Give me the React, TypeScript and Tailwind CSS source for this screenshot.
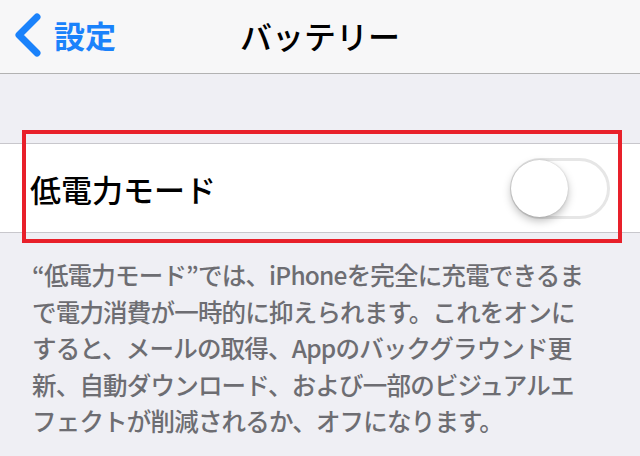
import React from "react";

const jp = { fontFamily: '"Noto Sans CJK JP", "Noto Sans", sans-serif' };

const BackChevron = () => (
  <svg width="30" height="46" viewBox="0 0 30 46" className="shrink-0">
    <polyline
      points="24,5 6,23 24,41"
      fill="none"
      stroke="#1a82fb"
      strokeWidth="7"
      strokeLinecap="round"
      strokeLinejoin="round"
    />
  </svg>
);

const Toggle = () => (
  <div className="relative w-[100px] h-[61px] rounded-full border-[3px] border-[#e6e6e6] bg-white">
    <div className="absolute left-[-2px] top-[-1px] w-[57px] h-[57px] rounded-full bg-white shadow-[0_4px_8px_rgba(0,0,0,0.25),0_0_2px_rgba(0,0,0,0.2)]" />
  </div>
);

export default function App() {
  return (
    <div className="w-[640px] h-[456px] bg-[#efeff4] overflow-hidden relative" style={jp}>
      {/* nav bar */}
      <div className="h-[74px] bg-[#f7f7f8] border-b border-[#b2b2b2] relative flex items-center">
        <div className="flex items-center gap-[11px] pl-[13px] pb-[4px]">
          <BackChevron />
          <span className="text-[31px] leading-none text-[#1a82fb] font-bold">設定</span>
        </div>
        <div className="absolute inset-x-0 top-0 h-[74px] flex items-center justify-center pb-[4px]">
          <span className="text-[32px] leading-none text-black font-medium">バッテリー</span>
        </div>
      </div>

      {/* cell */}
      <div className="mt-[69px] h-[90px] bg-white border-y border-[#c8c7cc] flex items-center justify-between pl-[30px] pr-[30px]">
        <span className="text-[31px] leading-none text-black font-medium">低電力モード</span>
        <Toggle />
      </div>

      {/* footer note */}
      <div className="pt-[24px] pl-[32px] text-[24.5px] leading-[36.6px] tracking-[-0.8px] text-[#6d6d72] font-medium whitespace-nowrap">
        “低電力モード”では、iPhoneを完全に充電できるま
        <br />
        で電力消費が一時的に抑えられます。これをオンに
        <br />
        すると、メールの取得、Appのバックグラウンド更
        <br />
        新、自動ダウンロード、および一部のビジュアルエ
        <br />
        フェクトが削減されるか、オフになります。
      </div>

      {/* red highlight annotation */}
      <div className="absolute left-[22px] top-[130px] w-[600px] h-[113px] border-4 border-[#e8202a] pointer-events-none" />
    </div>
  );
}
